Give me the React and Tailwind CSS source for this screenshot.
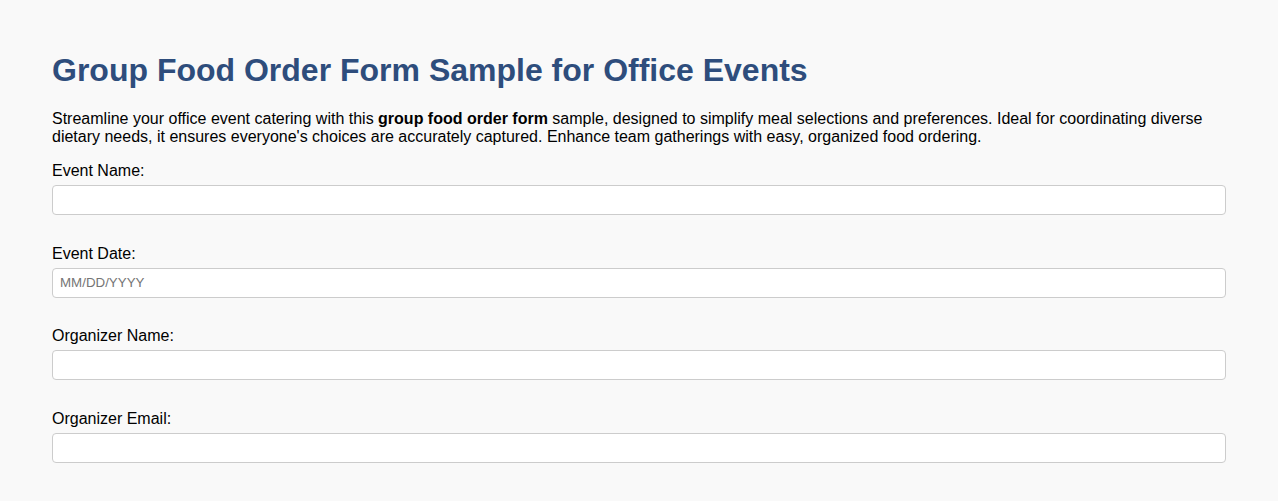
export default function App() {
  const fields = [
    { label: "Event Name:", placeholder: "" },
    { label: "Event Date:", placeholder: "MM/DD/YYYY" },
    { label: "Organizer Name:", placeholder: "" },
    { label: "Organizer Email:", placeholder: "" },
  ];
  return (
    <div className="min-h-[501px] bg-[#f9f9f9] px-[52px] pt-[52px] pb-[20px] font-['Liberation_Sans',Arial,sans-serif] text-black">
      <h1 className="text-[32px] leading-[37px] font-bold text-[#2e4d7c] mb-[21px]">
        Group Food Order Form Sample for Office Events
      </h1>
      <p className="text-[16px] leading-[18px] mb-[16px]">
        Streamline your office event catering with this <strong className="font-bold">group food order form</strong> sample, designed to simplify meal selections and preferences. Ideal for coordinating diverse dietary needs, it ensures everyone's choices are accurately captured. Enhance team gatherings with easy, organized food ordering.
      </p>
      <form className="flex flex-col">
        {fields.map((f) => (
          <div key={f.label} className="flex flex-col mb-[29.67px]">
            <label className="block text-[16px] leading-[18px] mb-[5px]">{f.label}</label>
            <input
              type="text"
              placeholder={f.placeholder}
              className="h-[30px] w-full bg-white border border-[#cccccc] rounded-[4px] px-[7px] text-[13.333px] font-['Liberation_Sans',Arial,sans-serif] placeholder:text-[#757575] outline-none"
            />
          </div>
        ))}
      </form>
    </div>
  );
}
